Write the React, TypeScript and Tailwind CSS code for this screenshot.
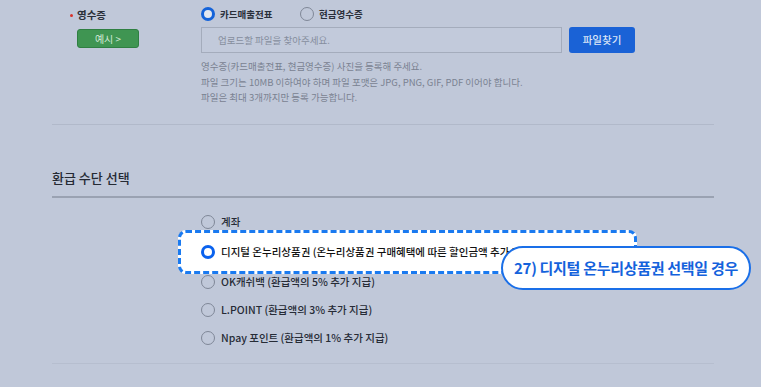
import React from 'react'

function Radio({ checked = false, bright = false }: { checked?: boolean; bright?: boolean }) {
  if (checked) {
    return (
      <span
        className={`block w-[14px] h-[14px] rounded-full border-[3.5px] shrink-0 ${
          bright ? 'border-[#0a62ee] bg-white' : 'border-[#1463d9] bg-[#e2e7f0]'
        }`}
      />
    )
  }
  return <span className="block w-[14px] h-[14px] rounded-full border border-[#7f8797] shrink-0" />
}

const options = [
  { label: '계좌', top: 'mt-[10px]' },
  { label: '디지털 온누리상품권 (온누리상품권 구매혜택에 따른 할인금액 추가 지급)', top: 'mt-[2px]', active: true },
  { label: 'OK캐쉬백 (환급액의 5% 추가 지급)', top: 'mt-[2px]' },
  { label: 'L.POINT (환급액의 3% 추가 지급)', top: '' },
  { label: 'Npay 포인트 (환급액의 1% 추가 지급)', top: '' },
]

export default function App() {
  return (
    <div className="relative w-[761px] h-[387px] overflow-hidden bg-[#c0c8d9] text-[#2a2f3a] font-['Noto_Sans_CJK_KR','Noto_Sans',sans-serif]">
      <div className="ml-[52px] w-[662px]">

        {/* Receipt upload */}
        <div className="flex h-[125px] border-b border-[#b1b9ca]">
          <div className="w-[149px] shrink-0 pl-[18px] pt-[7px]">
            <div className="flex items-center h-[16px]">
              <span className="w-[3px] h-[3px] rounded-full bg-[#d8322a] mr-[4px]" />
              <span className="text-[10.5px] font-bold leading-none">영수증</span>
            </div>
            <button className="mt-[6px] ml-[7px] w-[62px] h-[19px] rounded-[3px] bg-[#3f9552] border border-[#2f7f42] text-[10px] text-[#d3ead7] leading-none">
              예시 &gt;
            </button>
          </div>

          <div className="flex-1 pt-[4px]">
            <div className="flex items-center h-[20px]">
              <div className="flex items-center w-[99px]">
                <Radio checked />
                <span className="ml-[5px] text-[9.5px] font-bold">카드매출전표</span>
              </div>
              <div className="flex items-center">
                <Radio />
                <span className="ml-[5px] text-[9.5px] font-bold">현금영수증</span>
              </div>
            </div>

            <div className="flex mt-[3px]">
              <div className="w-[361px] h-[26px] border border-[#a4acbc] bg-[#c2cadb] flex items-center pl-[16px] text-[9.5px] text-[#868e9e]">
                업로드할 파일을 찾아주세요.
              </div>
              <button className="ml-[7px] w-[66px] h-[26px] rounded-[3px] bg-[#1a62d6] text-[10.5px] text-[#dbe5f7] font-medium">
                파일찾기
              </button>
            </div>

            <div className="mt-[6px] text-[9.5px] leading-[15.5px] text-[#7a8291]">
              <p>영수증(카드매출전표, 현금영수증) 사진을 등록해 주세요.</p>
              <p>파일 크기는 10MB 이하여야 하며 파일 포맷은 JPG, PNG, GIF, PDF 이어야 합니다.</p>
              <p>파일은 최대 3개까지만 등록 가능합니다.</p>
            </div>
          </div>
        </div>

        {/* Refund method */}
        <h2 className="mt-[44px] text-[13px] leading-[18px] font-medium text-[#252a34]">환급 수단 선택</h2>
        <div className="mt-[9px] h-[2px] bg-[#9aa2b2]" />

        <div className="pl-[149px]">
          {options.map(o => (
            <div key={o.label} className={`relative flex items-center h-[28px] ${o.top}`}>
              {o.active && (
                <div className="absolute left-[-23px] top-[-8px] w-[459px] h-[44px] rounded-[8px] bg-white border-[3px] border-dashed border-[#1a7af0]" />
              )}
              <div className="relative flex items-center whitespace-nowrap">
                <Radio checked={o.active} bright />
                <span className={`ml-[6px] text-[10.5px] font-medium ${o.active ? 'text-[#111]' : 'text-[#262b36]'}`}>
                  {o.label}
                </span>
              </div>
            </div>
          ))}
        </div>

        <div className="mt-[11px] h-px bg-[#b6becf]" />
      </div>

      {/* Callout */}
      <div className="absolute left-[501px] top-[246px] w-[250px] h-[44px] rounded-full bg-white border-2 border-[#1a6fe8] flex items-center justify-center">
        <span className="text-[15px] font-bold text-[#1462dc] tracking-[-0.3px]">27) 디지털 온누리상품권 선택일 경우</span>
      </div>
    </div>
  )
}
